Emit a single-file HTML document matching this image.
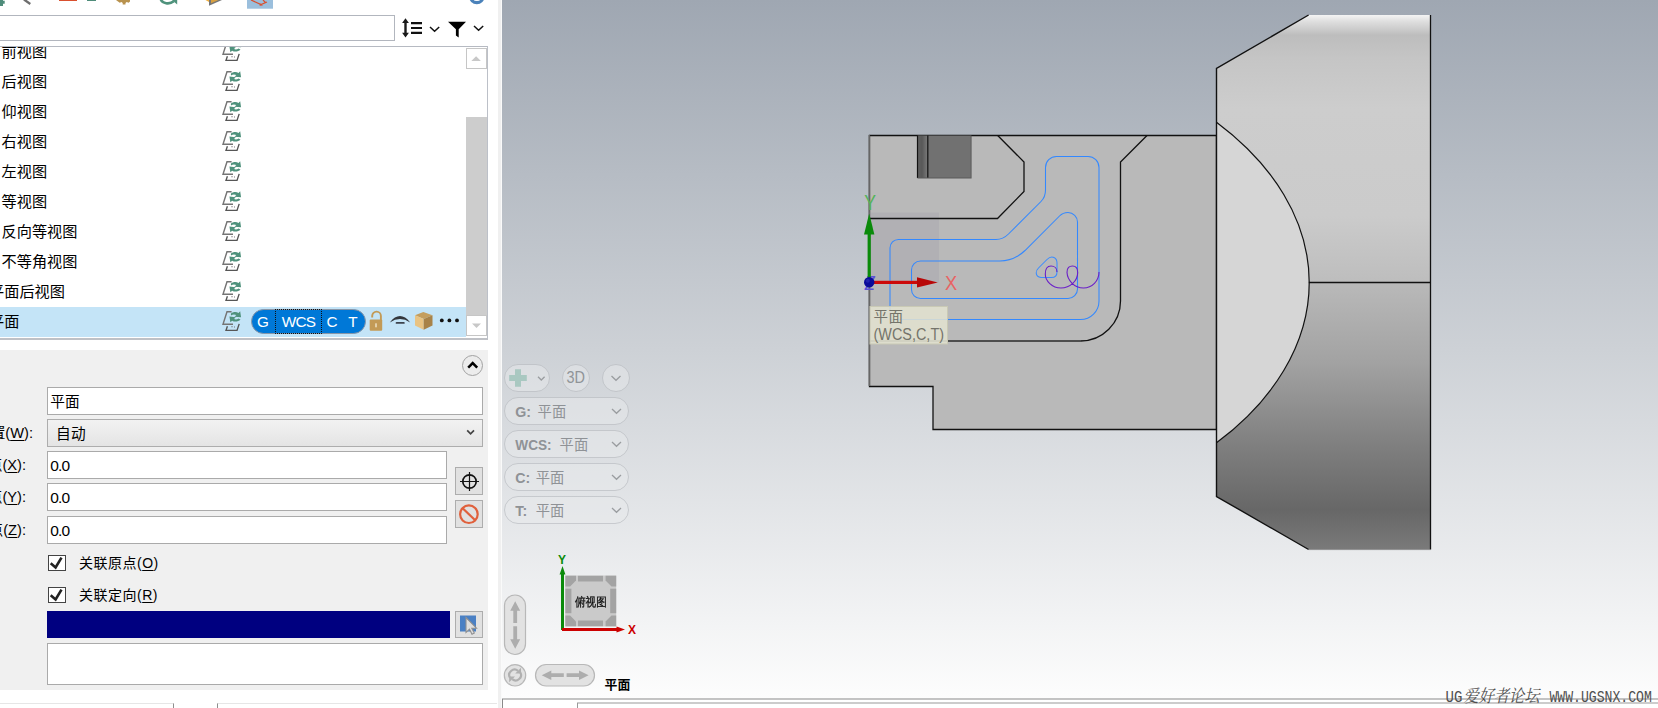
<!DOCTYPE html>
<html lang="zh-CN">
<head>
<meta charset="utf-8">
<title>Mastercam 平面</title>
<style>
*{box-sizing:border-box;margin:0;padding:0}
html,body{width:1658px;height:708px;overflow:hidden;background:#fff}
body{position:relative;font-family:"Liberation Sans","Noto Sans CJK SC",sans-serif;font-size:14.67px;color:#000}
.abs{position:absolute}
#panel{position:absolute;left:0;top:0;width:498px;height:708px;background:#fff;overflow:hidden}
#split{position:absolute;left:498px;top:0;width:4px;height:708px;background:#f0f0f0}
#split2{position:absolute;left:501px;top:0;width:1px;height:708px;background:#fafafa}
#search{position:absolute;left:-2px;top:15px;width:397px;height:26px;border:1px solid #b2b6be;background:#fff}
#list{position:absolute;left:-2px;top:46px;width:490px;height:294px;border:1px solid #b6bac2;border-right:1px solid #bcc0c8;border-bottom:2px solid #bfc1c6;background:#fff;overflow:hidden}
.row{position:absolute;left:0;width:467px;height:30px;line-height:30px;font-size:15.2px;white-space:nowrap}
.row span{position:absolute;top:0}
.row.sel{background:#c4e4f7}
.ric{position:absolute;left:222.7px;top:4px;width:20px;height:20px}
#sb-up,#sb-dn{position:absolute;left:467px;width:21px;height:21px;border:1px solid #c6c6c6;background:#fff}
#sb-thumb{position:absolute;left:467px;top:70px;width:21px;height:198px;background:#cdcdcd}
#form{position:absolute;left:0;top:350px;width:488px;height:340px;background:#f0f0f0}
.inp{position:absolute;left:47px;height:28px;border:1px solid #aaa;background:#fff;line-height:26px;padding-top:1px;padding-left:2.3px;white-space:nowrap}
.num{font-size:15.5px;letter-spacing:-0.9px}
.lbl{position:absolute;right:465px;white-space:nowrap;line-height:20px;text-align:right}
.lbl u,.cbl u{text-decoration:underline;text-underline-offset:2px}
.btn{position:absolute;left:455px;width:28px;height:28px;border:1px solid #adadad;background:#e1e1e1}
.cb{position:absolute;left:48px;width:18px;height:16px;border:1px solid #444;background:#fff}
.cbl{position:absolute;left:79px;white-space:nowrap;line-height:20px;font-size:14px;letter-spacing:0.5px}
#vp{position:absolute;left:0;top:0;width:1658px;height:708px}
</style>
</head>
<body>
<div id="panel">
  <!-- top toolbar (cropped) -->
  <svg class="abs" style="left:0;top:0" width="498" height="12" viewBox="0 0 498 12">
    <path d="M0 0h3v.800h1.700v3h-1.700v2.200h-3z" fill="#4f8c7a"/>
    <path d="M24 -.500l6.300 4.500" stroke="#6e6e6e" stroke-width="2.300" fill="none"/>
    <rect x="59" y="0" width="18" height="1" fill="#d9502f"/>
    <rect x="87" y="0" width="9" height="1" fill="#4f8c7a"/>
    <path d="M116 0h14v1.500l-1.500 1.200-1.800-.7-1.200 1v1.600h-2.800v-1.600l-1.200-1-1.800.7-1.700-1.200z" fill="#b8924e"/>
    <path d="M160.800 -.500C162.500 3.300 169 5 173.800 1.300" stroke="#4f927c" stroke-width="2.600" fill="none"/><path d="M172 0h5.200v4.400z" fill="#4f927c"/>
    <path d="M209 0l0 5.800 13-5.800z" fill="#777"/>
    <path d="M205.500 0h3.500v2z" fill="#f0b040"/>
    <path d="M211 0h7.500l-7.500 3.300z" fill="#d8a040"/>
    <rect x="247" y="0" width="26" height="8.700" fill="#9bbfdd"/>
    <path d="M251 0l10 4.500 6-2.500M263 0l2.500 2.500" stroke="#d9502f" stroke-width="1.200" fill="none"/>
    <path d="M260 3.500l3 2-3.500.3z" fill="#d9502f"/>
    <circle cx="476.800" cy="-3.700" r="7.900" fill="#4b82ba"/>
    <ellipse cx="476.900" cy="0" rx="3.100" ry="0.900" fill="#fff"/>
  </svg>
  <div id="search"></div>
  <!-- sort / filter icons -->
  <svg class="abs" style="left:398px;top:14px" width="92" height="28" viewBox="398 14 92 28">
    <path d="M405.500 18.300l3.400 4.700h-2.200v9.800h2.200l-3.400 4.700-3.400-4.700h2.200v-9.800h-2.200z" fill="#1a1a1a"/>
    <path d="M411 23.200h11M411 28h11M411 32.800h11" stroke="#111" stroke-width="2.200"/>
    <path d="M430 27l4.600 4.300 4.600-4.300" stroke="#111" stroke-width="1.500" fill="none"/>
    <path d="M448 21.700h18l-7.300 7.600v8.200l-2.800-2v-6.200z" fill="#000"/>
    <path d="M474 26l4.600 4.300 4.600-4.300" stroke="#111" stroke-width="1.500" fill="none"/>
  </svg>
  <div id="list">
    <svg width="0" height="0" style="position:absolute">
      <defs>
        <symbol id="rf" viewBox="0 0 20 20">
          <path d="M9.600 0.700h-4.600l-4 12.600h10" fill="none" stroke="#747474" stroke-width="1.400"/>
          <path d="M5.400 15.200l-1.400 4.200h11l2.200-6.500" fill="none" stroke="#565656" stroke-width="1.400"/>
          <path d="M10 15v1.300M12.500 15.500v1" stroke="#777" stroke-width="1"/>
          <g transform="translate(19.500 0) scale(1.100 1.020) translate(-19.500 0)">
          <path d="M9.800 2.600c2-1.800 5-2 7-.6l1.500-1.800.8 6-6-.6 1.700-1.600c-1.600-1-3.600-.7-4.800.4z" fill="#4f927c"/>
          <path d="M18.600 8.300c-2 2.300-5.400 2.600-7.600 1.200l-1.600 1.600-.9-5.600 5.800.7-1.600 1.600c1.300.8 3 .5 4-.5z" fill="#4f927c"/>
          </g>
        </symbol>
      </defs>
    </svg>
    <div class="row" style="top:-10px"><span style="left:2.5px">前视图</span><svg class="ric"><use href="#rf"/></svg></div>
    <div class="row" style="top:20px"><span style="left:2.5px">后视图</span><svg class="ric"><use href="#rf"/></svg></div>
    <div class="row" style="top:50px"><span style="left:2.5px">仰视图</span><svg class="ric"><use href="#rf"/></svg></div>
    <div class="row" style="top:80px"><span style="left:2.5px">右视图</span><svg class="ric"><use href="#rf"/></svg></div>
    <div class="row" style="top:110px"><span style="left:2.5px">左视图</span><svg class="ric"><use href="#rf"/></svg></div>
    <div class="row" style="top:140px"><span style="left:2.5px">等视图</span><svg class="ric"><use href="#rf"/></svg></div>
    <div class="row" style="top:170px"><span style="left:2.5px">反向等视图</span><svg class="ric"><use href="#rf"/></svg></div>
    <div class="row" style="top:200px"><span style="left:2.5px">不等角视图</span><svg class="ric"><use href="#rf"/></svg></div>
    <div class="row" style="top:230px"><span style="left:-10px">平面后视图</span><svg class="ric"><use href="#rf"/></svg></div>
    <div class="row sel" style="top:260px"><span style="left:-10px">平面</span><svg class="ric"><use href="#rf"/></svg>
      <div class="abs" style="left:252px;top:2px;width:115px;height:25px;border-radius:13px;background:#0078d7;border:1px solid #8a97a8"></div>
      <div class="abs" style="left:276px;top:2px;width:47px;height:25px;border:1px dotted #111"></div>
      <span style="left:256px;width:16px;text-align:center;color:#fff;font-size:15.3px;top:0px">G</span>
      <span style="left:277px;width:45px;text-align:center;color:#fff;font-size:15.3px;letter-spacing:-0.7px;top:0px">WCS</span>
      <span style="left:325px;width:16px;text-align:center;color:#fff;font-size:15.3px;top:0px">C</span>
      <span style="left:346px;width:16px;text-align:center;color:#fff;font-size:15.3px;top:0px">T</span>
      <svg class="abs" style="left:369px;top:3px" width="94" height="22" viewBox="368 310 94 22">
        <!-- open padlock -->
        <path d="M372.200 317.600v-1.600a4.350 4.350 0 0 1 8.700 0v4" fill="none" stroke="#c39a56" stroke-width="1.900"/>
        <rect x="369.700" y="319.600" width="12.500" height="11.100" rx="1" fill="#c39a56"/>
        <rect x="375.200" y="323.300" width="1.600" height="4" fill="#ecdcbc"/>
        <!-- arc display -->
        <path d="M389.800 322.400Q400 309.800 410.200 322.400Q400 315.800 389.800 322.400z" fill="#33363c"/>
        <path d="M396.600 322.900L403.800 322.900" fill="none" stroke="#3c424c" stroke-width="1.900" stroke-linecap="round"/>
        <!-- box -->
        <path d="M415 315.300l8.300-3.300 9.200 3.300-8.800 3.700z" fill="#c49e5e"/>
        <path d="M415 315.300l8.700 3.700v10.800l-8.700-4.300z" fill="#e9c382"/>
        <path d="M423.700 319l8.800-3.700v10.200l-8.800 4.300z" fill="#a88248"/>
        <!-- dots -->
        <circle cx="441.800" cy="320.400" r="1.900" fill="#111"/><circle cx="449.400" cy="320.400" r="1.900" fill="#111"/><circle cx="457" cy="320.400" r="1.900" fill="#111"/>
      </svg>
    </div>
    <div id="sb-up" style="top:1px"><svg width="19" height="19" viewBox="0 0 19 19"><path d="M4.300 12l4.800-4.800 4.800 4.800z" fill="#c8c8c8"/></svg></div>
    <div id="sb-thumb"></div>
    <div id="sb-dn" style="top:268px;height:21px"><svg width="19" height="19" viewBox="0 0 19 19"><path d="M5 7.500l4.500 4.500 4.500-4.500z" fill="#c8c8c8"/></svg></div>
  </div>
  <div id="form">
    <div class="abs" style="left:462px;top:5px;width:21px;height:21px;border-radius:50%;border:1px solid #a2a2a2;background:#ececec"></div>
    <svg class="abs" style="left:462px;top:5px" width="21" height="21" viewBox="0 0 21 21"><path d="M6.200 12.700l4.500-4.600 4.500 4.600" fill="none" stroke="#000" stroke-width="2.500"/></svg>
    <div class="inp" style="top:37px;width:436px">平面</div>
    <div class="lbl" style="top:73px;right:455px">位置(<u>W</u>):</div>
    <div class="inp" style="top:69px;width:436px;background:linear-gradient(#f2f2f2,#e4e4e4);border-color:#adadad;padding-left:8px;letter-spacing:0.300px">自动</div>
    <svg class="abs" style="left:464px;top:79px" width="12" height="8" viewBox="0 0 12 8"><path d="M3.200 1.300l3.400 3.500 3.400-3.500" fill="none" stroke="#444" stroke-width="1.700"/></svg>
    <div class="lbl" style="top:105px;right:462px">原点(<u>X</u>):</div>
    <div class="inp" style="top:101px;width:400px"><span class="num">0.0</span></div>
    <div class="lbl" style="top:137px;right:462px">原点(<u>Y</u>):</div>
    <div class="inp" style="top:133px;width:400px"><span class="num">0.0</span></div>
    <div class="lbl" style="top:170px;right:462px">原点(<u>Z</u>):</div>
    <div class="inp" style="top:166px;width:400px"><span class="num">0.0</span></div>
    <div class="btn" style="top:117px"><svg width="26" height="26" viewBox="0 0 26 26"><circle cx="13.500" cy="13.500" r="6.700" fill="none" stroke="#111" stroke-width="1.700"/><path d="M13.500 4v19M4 13.500h19" stroke="#111" stroke-width="1.200"/></svg></div>
    <div class="btn" style="top:150px"><svg width="26" height="26" viewBox="0 0 26 26"><circle cx="12.900" cy="13.200" r="8.800" fill="none" stroke="#e0603c" stroke-width="2.200"/><path d="M6.600 7.200l12.600 12" stroke="#e0603c" stroke-width="2.200"/></svg></div>
    <div class="cb" style="top:205px"><svg width="16" height="14" viewBox="0 0 16 14" style="display:block"><path d="M1.700 7.200l4.900 4.200 5.900-9.800" fill="none" stroke="#222" stroke-width="2.600"/></svg></div>
    <div class="cbl" style="top:203px">关联原点(<u>O</u>)</div>
    <div class="cb" style="top:237px"><svg width="16" height="14" viewBox="0 0 16 14" style="display:block"><path d="M1.700 7.200l4.900 4.200 5.900-9.800" fill="none" stroke="#222" stroke-width="2.600"/></svg></div>
    <div class="cbl" style="top:235px">关联定向(<u>R</u>)</div>
    <div class="abs" style="left:47px;top:261px;width:403px;height:27px;background:#000080"></div>
    <div class="btn" style="top:261px;height:27px"><svg width="26" height="25" viewBox="0 0 26 25"><rect x="4" y="3.500" width="16" height="16" fill="#4a80c4"/><path d="M10 5.500v15l3.500-3.300 2.500 5 2.300-1.200-2.500-4.800h4.700z" fill="#dedede" stroke="#909090" stroke-width="1.100"/></svg></div>
    <div class="abs" style="left:47px;top:293px;width:436px;height:42px;border:1px solid #aaa;background:#fff"></div>
  </div>
  <!-- bottom tab outlines -->
  <div class="abs" style="left:0;top:703px;width:174px;height:6px;border-top:1px solid #e6e6e6;border-right:1px solid #8e8e8e"></div>
  <div class="abs" style="left:217px;top:703px;width:280px;height:6px;border-top:1px solid #e6e6e6;border-left:1px solid #8e8e8e"></div>
</div>
<div id="split"></div><div id="split2"></div>
<svg id="vp" width="1658" height="708" viewBox="0 0 1658 708" style="font-family:'Liberation Sans','Noto Sans CJK SC',sans-serif">
  <defs>
    <linearGradient id="bg" x1="0" y1="0" x2="0" y2="1"><stop offset="0" stop-color="#9fa7b2"/><stop offset="0.5" stop-color="#cdd1d6"/><stop offset="1" stop-color="#fdfdfd"/></linearGradient>
    <linearGradient id="gup" gradientUnits="userSpaceOnUse" x1="0" y1="15" x2="0" y2="283">
      <stop offset="0" stop-color="#f4f4f4"/><stop offset="0.025" stop-color="#dedede"/><stop offset="0.075" stop-color="#bdbdbd"/><stop offset="0.16" stop-color="#c5c5c5"/><stop offset="0.35" stop-color="#cdcdcd"/><stop offset="0.75" stop-color="#cbcbcb"/><stop offset="1" stop-color="#bdbdbd"/>
    </linearGradient>
    <linearGradient id="glo" gradientUnits="userSpaceOnUse" x1="0" y1="283" x2="0" y2="550">
      <stop offset="0" stop-color="#b9b9b9"/><stop offset="0.3" stop-color="#a2a2a2"/><stop offset="0.6" stop-color="#808080"/><stop offset="0.85" stop-color="#676767"/><stop offset="1" stop-color="#7a7a7a"/>
    </linearGradient>
    <linearGradient id="gsl" x1="0" y1="0" x2="1" y2="0"><stop offset="0" stop-color="#606060"/><stop offset="0.4" stop-color="#585858"/><stop offset="1" stop-color="#7c7c7c"/></linearGradient>
    <clipPath id="cv"><rect x="502" y="0" width="1156" height="699"/></clipPath>
  </defs>
  <rect x="502" y="0" width="1156" height="699" fill="url(#bg)"/>
  <g clip-path="url(#cv)">
    <!-- left block -->
    <path d="M869.500 135.500H1216.500V429.500H933V386.500H869.500z" fill="#b9b9b9" stroke="#111" stroke-width="1.300"/>
    <line x1="869.300" y1="135" x2="869.300" y2="386" stroke="#666" stroke-width="1.500"/>
    <!-- dark slot -->
    <rect x="917.500" y="135.500" width="53.300" height="42.500" fill="#717171"/>
    <rect x="918" y="136" width="10" height="42" fill="url(#gsl)"/>
    <path d="M917.500 135.500V178M927.800 135.500V178" stroke="#111" stroke-width="1.200" fill="none"/>
    <path d="M917.500 178H971V135.500" stroke="#5a5a5a" stroke-width="1.200" fill="none"/>
    <!-- plane shade -->
    <rect x="869.500" y="212.500" width="69.500" height="70" fill="#9a96a6" opacity="0.24"/>
    <!-- pocket outline -->
    <path d="M869.500 218.500H997.500L1024 191.500V162L997.700 135.500" fill="none" stroke="#111" stroke-width="1.300"/>
    <path d="M1147 135.500L1120.500 162V301A40 40 0 0 1 1080.500 341H947" fill="none" stroke="#111" stroke-width="1.300"/>
    <path d="M869.500 341H1081" fill="none" stroke="#555" stroke-width="1.400"/>
    <!-- toolpath outer -->
    <path d="M890 320V248A8.500 8.500 0 0 1 898.500 239.500H996Q1003 239.500 1008.500 234L1041 201.500Q1045.500 197 1045.500 190V167.500A11 11 0 0 1 1056.500 156.500H1088A11 11 0 0 1 1099 167.500V301A18.500 18.500 0 0 1 1080.500 319.500H890" fill="none" stroke="#3388ff" stroke-width="1.050"/>
    <!-- toolpath inner -->
    <path d="M911.500 289.500V270A9 9 0 0 1 920.500 261H1000Q1014 261 1025 250.500L1059.500 216Q1063 212.500 1068 212.500A9.500 9.500 0 0 1 1077.500 222V289A9.500 9.500 0 0 1 1068 298.500H920.500A9 9 0 0 1 911.500 289.500z" fill="none" stroke="#3388ff" stroke-width="1.050"/>
    <!-- small loop -->
    <path d="M1047 259.500Q1050.500 256 1054 257.500Q1057 259 1057 263V272Q1057 277.500 1051.500 277.500H1041Q1036.500 277 1036.200 273Q1036 270.500 1038.500 268z" fill="none" stroke="#3a8cff" stroke-width="1.050"/>
    <!-- purple trochoid -->
    <path d="M1099 272C1099 281 1092 288 1083.500 288C1074 288 1067.500 280 1067 272.500C1066.800 267.500 1069.500 266 1072.500 266C1075.500 266 1077.700 268.500 1077.700 272.500C1077.700 281 1070 288 1061 288C1052 288 1045.300 281 1045.300 274C1045.300 268.500 1048 266 1051 266C1054.500 266 1057 268.500 1057 272" fill="none" stroke="#6a1fc8" stroke-width="1.100"/>
    <!-- right block -->
    <path d="M1216.500 68.500L1308.600 15H1430.500V282.500H1309.200A386.900 246.800 0 0 0 1216.500 122.200z" fill="url(#gup)"/>
    <path d="M1216.500 496.500L1308.600 549.500H1430.500V282.500H1309.200A386.900 246.800 0 0 1 1216.500 442.800z" fill="url(#glo)"/>
    <path d="M1216.500 122.200A386.900 246.800 0 0 1 1216.500 442.800z" fill="#d6d6d6"/>
    <path d="M1216.500 122.200A386.900 246.800 0 0 1 1216.500 442.800" fill="none" stroke="#111" stroke-width="1.200"/>
    <path d="M1308.600 15L1216.500 68.500V496.500L1308.600 549.500" fill="none" stroke="#111" stroke-width="1.400"/>
    <path d="M1430.500 15V549.500" stroke="#111" stroke-width="1.300"/>
    <path d="M1308.800 282.500H1430.500" stroke="#111" stroke-width="1.300"/>
    <path d="M1308.600 549.600H1430.500" stroke="#888" stroke-width="0.800"/>
    <!-- axes -->
    <text x="864.200" y="209.500" font-size="22" fill="#55b45a" font-family="Liberation Sans, sans-serif" textLength="11.800" lengthAdjust="spacingAndGlyphs">Y</text>
    <text x="864.800" y="289.800" font-size="19.500" fill="#5a50d8" font-style="italic" font-family="Liberation Sans, sans-serif" textLength="10" lengthAdjust="spacingAndGlyphs">Z</text>
    <rect x="867.600" y="232" width="3.200" height="50" fill="#0a8a0a"/>
    <path d="M869.200 213.500L874.400 234.500H864z" fill="#0a8a0a"/>
    <rect x="872" y="280.800" width="46" height="3.200" fill="#cc0a0a"/>
    <path d="M937.800 282.400L917 277.200V287.600z" fill="#b80808"/>
    <circle cx="869.200" cy="282.300" r="5.200" fill="#0a0a9a"/>
    <circle cx="867.800" cy="280.800" r="2" fill="#2a2ab8" opacity="0.700"/>
    <text x="945" y="289.800" font-size="20.700" fill="#e86464" font-family="Liberation Sans, sans-serif" textLength="12.200" lengthAdjust="spacingAndGlyphs">X</text>
    <!-- tooltip -->
    <rect x="870" y="306.500" width="77.500" height="37.500" fill="#e3e3d1" fill-opacity="0.860" stroke="#c9c9b5" stroke-width="1"/>
    <text x="873.500" y="322" font-size="14.500" fill="#74746a" letter-spacing="0.500">平面</text>
    <text x="873.500" y="340.300" font-size="15.800" fill="#74746a" font-family="Liberation Sans, sans-serif" textLength="70.500" lengthAdjust="spacingAndGlyphs">(WCS,C,T)</text>
  </g>
  <!-- view-control widgets -->
  <g fill="#e8eaec" fill-opacity="0.500" stroke="#b4b8bc" stroke-opacity="0.600" stroke-width="1">
    <rect x="504.500" y="364.500" width="45" height="27" rx="13.500"/>
    <circle cx="576" cy="378" r="13.500"/>
    <circle cx="616" cy="378" r="13.500"/>
    <rect x="504.500" y="397.500" width="124" height="27" rx="13.500"/>
    <rect x="504.500" y="430.500" width="124" height="27" rx="13.500"/>
    <rect x="504.500" y="463.500" width="124" height="27" rx="13.500"/>
    <rect x="504.500" y="496.500" width="124" height="27" rx="13.500"/>
  </g>
  <path d="M515 369.200h6v5.800h5.800v6h-5.800v5.800h-6v-5.800h-5.800v-6h5.800z" fill="#a9c8c1"/>
  <g fill="none" stroke="#9a9da0" stroke-width="1.300">
    <path d="M538 376.800l3.300 3.200 3.300-3.200"/>
    <path d="M611.500 376l4.500 4.300 4.500-4.300"/>
    <path d="M612 409l4.500 4.300 4.500-4.300"/><path d="M612 442l4.500 4.300 4.500-4.300"/><path d="M612 475l4.500 4.300 4.500-4.300"/><path d="M612 508l4.500 4.300 4.500-4.300"/>
  </g>
  <text x="566.400" y="383.400" font-size="16.600" fill="#909498" font-family="Liberation Sans, sans-serif" textLength="18.500" lengthAdjust="spacingAndGlyphs">3D</text>
  <g font-size="14.300" fill="#8f9296">
    <g font-weight="bold" font-family="Liberation Sans, sans-serif" font-size="14.200">
      <text x="515.300" y="416.500">G:</text><text x="515.300" y="449.500" textLength="36.300" lengthAdjust="spacingAndGlyphs">WCS:</text><text x="515.300" y="482.500">C:</text><text x="515.300" y="515.500">T:</text>
    </g>
    <text x="537.600" y="416.800">平面</text><text x="559.600" y="449.800">平面</text><text x="535.800" y="482.800">平面</text><text x="535.800" y="515.800">平面</text>
  </g>
  <!-- gnomon cube -->
  <rect x="565.200" y="575.500" width="51" height="51" fill="#cacaca"/>
  <g fill="#a3a3a3">
    <rect x="578" y="575.800" width="25" height="5.700"/><rect x="578" y="620.500" width="25" height="5.700"/>
    <rect x="565.400" y="588.700" width="6" height="24.500"/><rect x="610.200" y="588.700" width="6" height="24.500"/>
    <path d="M565.400 575.800h10.600v4.700l-5.900 5.900h-4.700z"/><path d="M616.200 575.800h-10.600v4.700l5.900 5.900h4.700z"/>
    <path d="M565.400 626.200h10.600v-4.700l-5.900-5.900h-4.700z"/><path d="M616.200 626.200h-10.600v-4.700l5.900-5.900h4.700z"/>
  </g>
  <text x="575" y="605.600" font-size="12" fill="#111" stroke="#111" stroke-width="0.300" textLength="31.800" lengthAdjust="spacingAndGlyphs" font-family="WenQuanYi Zen Hei, Noto Sans CJK SC, sans-serif">俯视图</text>
  <rect x="561" y="573" width="3" height="57" fill="#0a8a0a"/>
  <path d="M562.500 566l2.900 8.500h-5.800z" fill="#0a8a0a"/>
  <rect x="562" y="628" width="56" height="3" fill="#cc0000"/>
  <path d="M625 629.500l-8.500 2.900v-5.800z" fill="#cc0000"/>
  <text x="558" y="563.700" font-size="12" font-weight="bold" fill="#0a8a0a" font-family="Liberation Sans, sans-serif">Y</text>
  <text x="628" y="634" font-size="12" font-weight="bold" fill="#cc0000" font-family="Liberation Sans, sans-serif">X</text>
  <!-- pan / rotate pills -->
  <g fill="#e2e2e2" stroke="#b8b8b8" stroke-width="1.200">
    <rect x="504.500" y="595" width="21" height="59.500" rx="10.500"/>
    <circle cx="515" cy="675.300" r="10.700"/>
    <rect x="535.500" y="664.500" width="59" height="21.500" rx="10.750"/>
  </g>
  <g fill="#adadad">
    <path d="M515.200 601.300l5 9.500h-3.100v12.200h-3.800v-12.200h-3.100z"/><path d="M515.200 648.800l5-9.500h-3.100v-13.100h-3.800v13.100h-3.100z"/>
    <path d="M541.700 675.200l9.600-4.800v2.900h12.500v3.800h-12.500v2.900z"/><path d="M588.600 675.200l-9.600-4.800v2.900h-12.400v3.800h12.400v2.900z"/>
  </g>
  <g fill="none" stroke="#b0b0b0" stroke-width="2.200">
    <path d="M510 677.800a5.400 5.400 0 0 1 8-7"/><path d="M520.200 672.200a5.400 5.400 0 0 1-8 7"/>
  </g>
  <path d="M521 667.800v5.800h-5.800z" fill="#b0b0b0"/><path d="M509.200 682.200v-5.800h5.800z" fill="#b0b0b0"/>
  <text x="604.500" y="688.700" font-size="12.900" font-weight="bold" fill="#000">平面</text>
  <!-- bottom status box -->
  <rect x="502.500" y="699" width="1160" height="12" fill="#fff" stroke="#8a8a8a" stroke-width="1"/>
  <rect x="577.500" y="703" width="1085" height="8" fill="#fff" stroke="#9a9a9a" stroke-width="1"/>
  <!-- watermark -->
  <g transform="translate(0 701.600) scale(1 1.300)" fill="#4e4e4e" font-size="13.400">
    <text x="1445.500" y="0" font-family="Liberation Mono, monospace" textLength="16.800" lengthAdjust="spacingAndGlyphs">UG</text>
    <text x="1463.500" y="0" font-style="italic" font-family="'Noto Serif CJK SC', serif" textLength="76" lengthAdjust="spacingAndGlyphs">爱好者论坛</text>
    <text x="1549.500" y="0" font-family="Liberation Mono, monospace" textLength="102.300" lengthAdjust="spacingAndGlyphs">WWW.UGSNX.COM</text>
  </g>
</svg>
</body>
</html>
